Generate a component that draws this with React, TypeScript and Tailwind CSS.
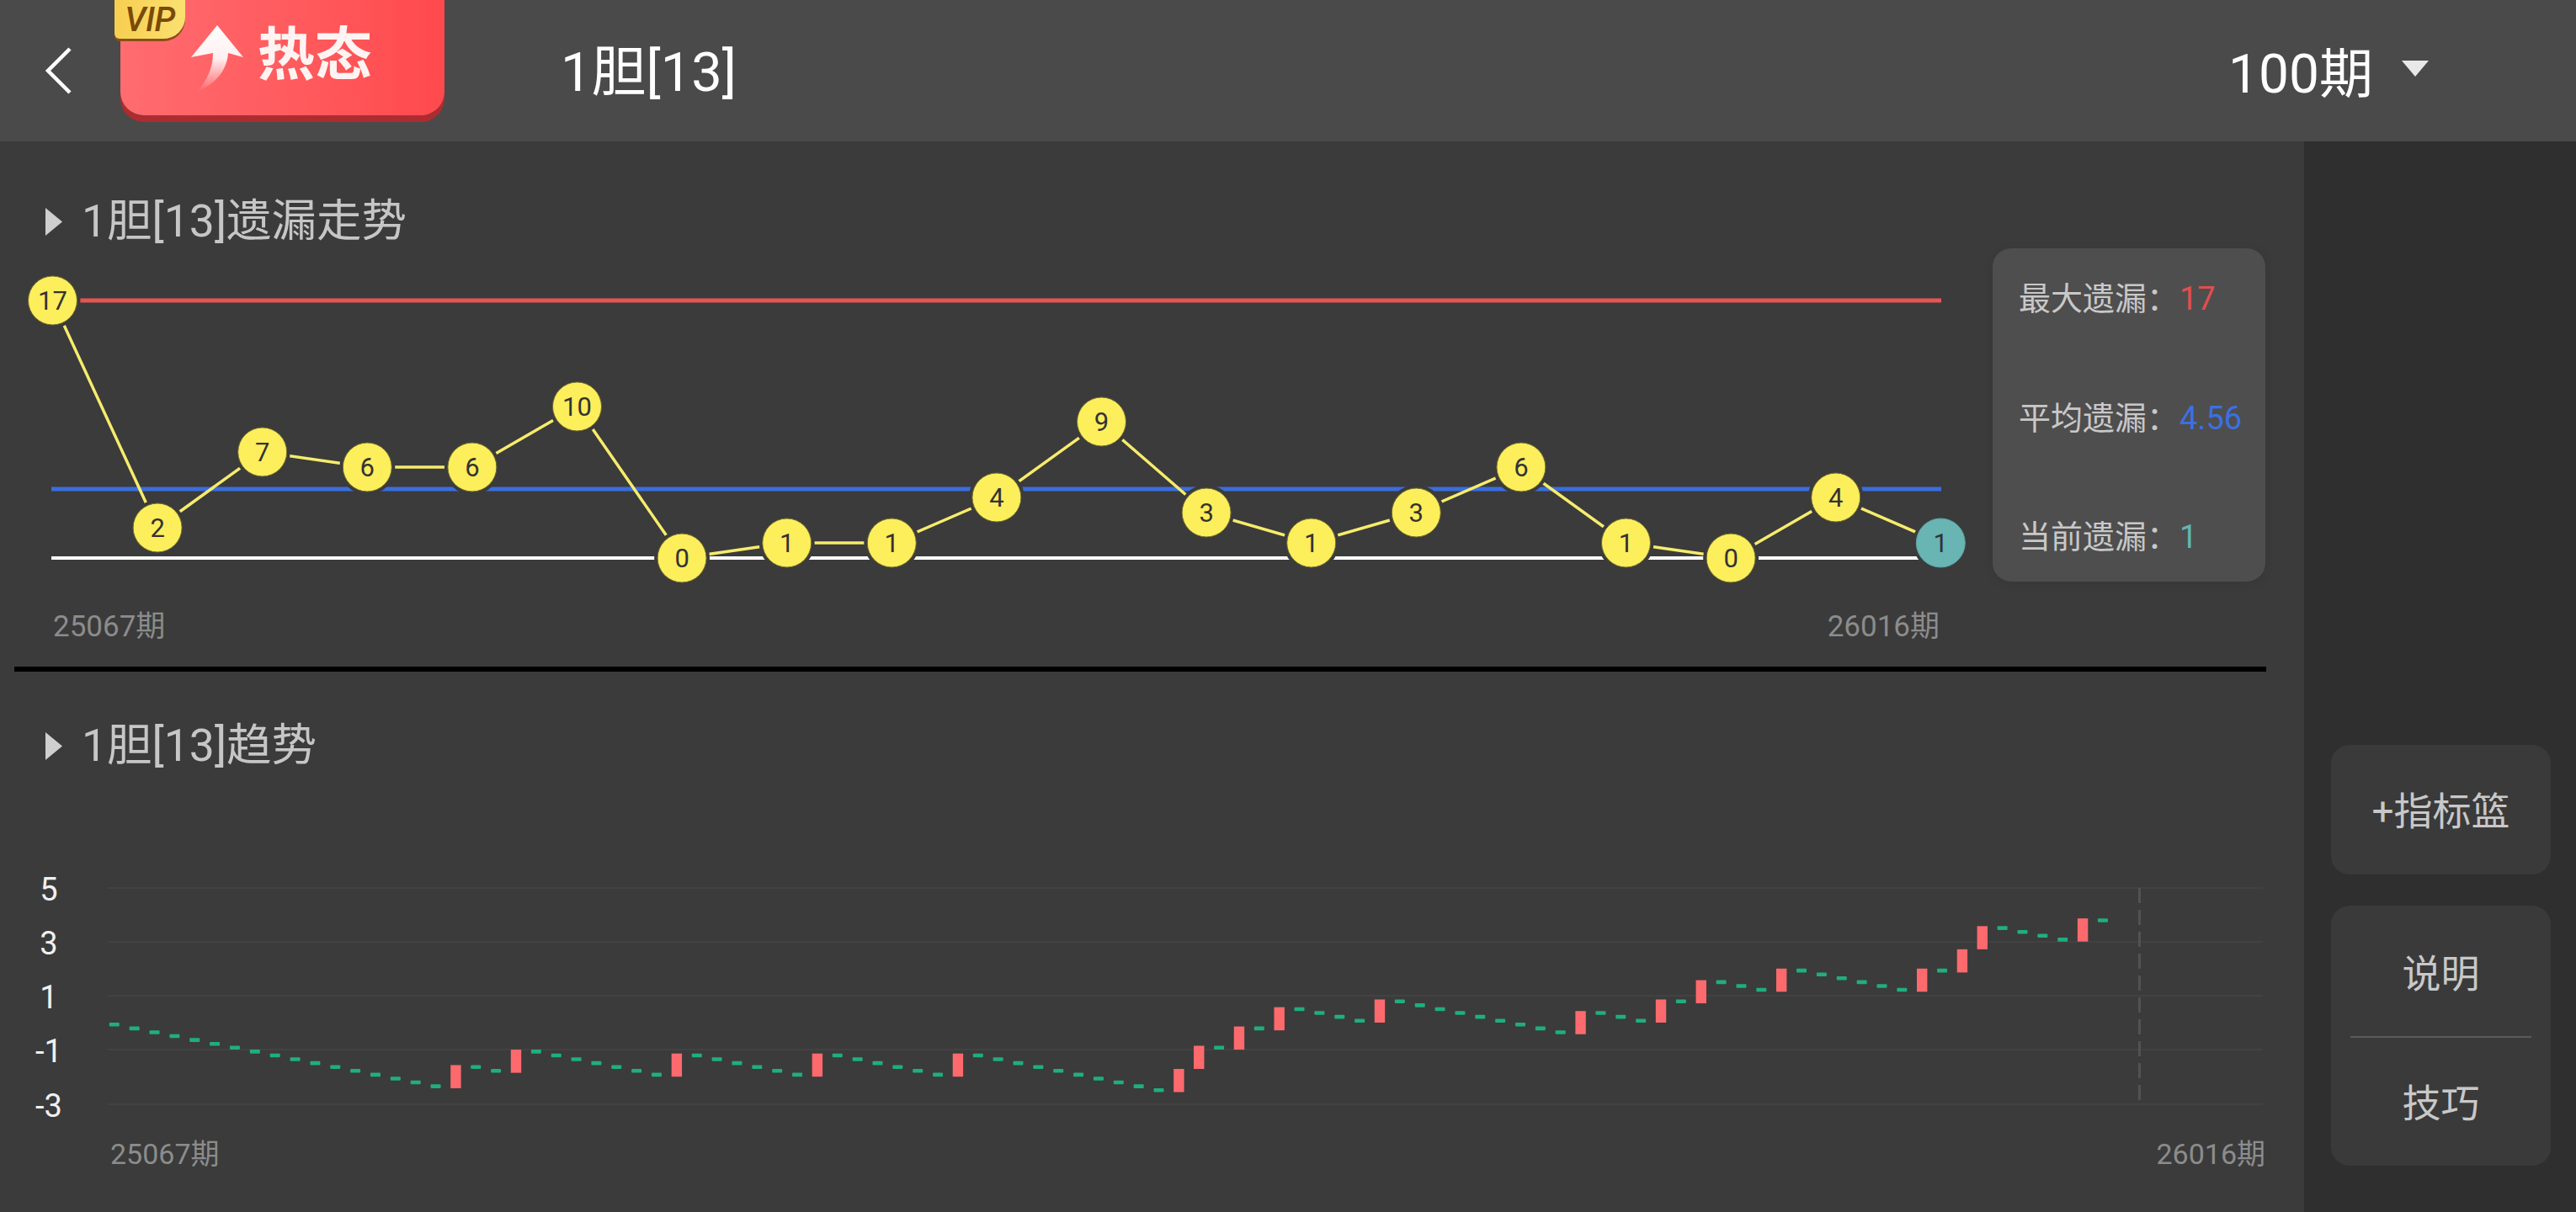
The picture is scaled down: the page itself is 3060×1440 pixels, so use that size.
import React from "react";

const nodes = [17, 2, 7, 6, 6, 10, 0, 1, 1, 4, 9, 3, 1, 3, 6, 1, 0, 4, 1];
const nx = (i: number) => 62.5 + i * 124.6;
const ny = (v: number) => 663 - 18 * v;

const hits = new Set([17, 20, 28, 35, 42, 53, 54, 56, 58, 63, 73, 77, 79, 83, 90, 92, 93, 98]);
const yOf = (v: number) => 1215 - 32.1 * v;

function Candles() {
  let c = 0;
  const out: React.ReactNode[] = [];
  for (let i = 0; i < 100; i++) {
    const x = 135.8 + i * 23.86;
    if (hits.has(i)) {
      const top = yOf(c + 6 / 7);
      const bot = yOf(c);
      out.push(<rect key={i} x={x - 6.2} y={top} width={12.4} height={bot - top} fill="#fc6a6e" />);
      c += 6 / 7;
    } else {
      const top = yOf(c);
      const bot = yOf(c - 1 / 7);
      out.push(<rect key={i} x={x - 6} y={top} width={12} height={bot - top} rx={1} fill="#1fae80" />);
      c -= 1 / 7;
    }
  }
  return <>{out}</>;
}

function TrendChart() {
  return (
    <svg viewBox="0 295 2367 396" className="w-[2367px] h-[396px] shrink-0 overflow-visible">
      <line x1={61} x2={2306} y1={357} y2={357} stroke="#e65454" strokeWidth={5} />
      <line x1={61} x2={2306} y1={581} y2={581} stroke="#3a6ede" strokeWidth={5} />
      <line x1={61} x2={2306} y1={663} y2={663} stroke="#ffffff" strokeWidth={4} />
      <polyline
        points={nodes.map((v, i) => `${nx(i)},${ny(v)}`).join(" ")}
        fill="none"
        stroke="#f6ec6c"
        strokeWidth={3.5}
      />
      {nodes.map((v, i) => {
        const last = i === nodes.length - 1;
        return (
          <g key={i}>
            <circle cx={nx(i)} cy={ny(v)} r={33} fill="#3b3b3b" />
            <circle
              cx={nx(i)}
              cy={ny(v)}
              r={29}
              fill={last ? "#68b5b4" : "#fdee5c"}
              stroke={last ? "#5aa3a2" : "#6f6a2e"}
              strokeWidth={1}
            />
            <text
              x={nx(i)}
              y={ny(v) + 11}
              textAnchor="middle"
              fontSize={31}
              fill="#333333"
            >
              {v}
            </text>
          </g>
        );
      })}
    </svg>
  );
}

function KChart() {
  const ys = [1055, 1119, 1183, 1247, 1312];
  const labels = ["5", "3", "1", "-1", "-3"];
  return (
    <svg viewBox="0 1020 2737 320" className="w-[2737px] h-[320px] shrink-0">
      {ys.map((y) => (
        <line key={y} x1={128} x2={2688} y1={y} y2={y} stroke="#424242" strokeWidth={2} />
      ))}
      <line x1={2541.5} x2={2541.5} y1={1055} y2={1312} stroke="#525252" strokeWidth={3} strokeDasharray="18 8" />
      {ys.map((y, i) => (
        <text key={y} x={58} y={y + 15} textAnchor="middle" fontSize={38} fill="#f0f0f0">
          {labels[i]}
        </text>
      ))}
      <Candles />
    </svg>
  );
}

function SectionTitle({ children, className }: { children: React.ReactNode; className: string }) {
  return (
    <div className={`flex items-center h-[60px] ${className}`}>
      <svg viewBox="0 0 20 33" className="w-[20px] h-[33px] ml-[54px] mr-[23px]">
        <path d="M0 0 L20 16.5 L0 33 Z" fill="#cfcfcf" />
      </svg>
      <span className="text-[53.5px] leading-[60px] text-[#c6c6c6]">{children}</span>
    </div>
  );
}

function Stat({ label, value, color }: { label: string; value: string; color: string }) {
  return (
    <div className="flex h-[44px] items-center text-[38px] leading-[44px] text-[#c8c8c8]">
      <span className="w-[191px]">{label}：</span>
      <span className={color}>{value}</span>
    </div>
  );
}

export default function App() {
  return (
    <div className="w-[3060px] h-[1440px] overflow-hidden flex flex-col bg-[#3b3b3b] font-[Roboto,'Noto_Sans_CJK_SC',sans-serif]">
      <header className="h-[168px] shrink-0 bg-[#4a4a4a] flex items-start">
        <svg viewBox="0 0 34 56" className="w-[34px] h-[56px] ml-[52px] mt-[56px] shrink-0">
          <path d="M31 2 L5 28 L31 54" fill="none" stroke="#ffffff" strokeWidth={4.5} />
        </svg>
        <div className="relative ml-[57px] w-[385px] h-[137px] shrink-0 rounded-b-[28px] bg-gradient-to-r from-[#ff6c70] to-[#ff494d] shadow-[0_8px_0_#ad2c30] flex items-start">
          <div className="absolute -left-[7px] top-0 w-[84px] h-[46px] rounded-br-[26px] rounded-bl-[6px] bg-gradient-to-r from-[#f7ce50] to-[#fbe070] shadow-[0_3px_0_#8a4f18] flex items-start justify-center">
            <span className="text-[40px] leading-[47px] italic font-medium tracking-[-0.5px] text-[#7a4a06]">
              VIP
            </span>
          </div>
          <svg viewBox="0 0 62 80" className="w-[62px] h-[80px] ml-[84px] mt-[30px] shrink-0">
            <defs>
              <linearGradient id="arrowFade" x1="0" y1="0" x2="0" y2="1">
                <stop offset="0" stopColor="#ffffff" />
                <stop offset="0.5" stopColor="#ffffff" stopOpacity="0.9" />
                <stop offset="1" stopColor="#ffffff" stopOpacity="0" />
              </linearGradient>
            </defs>
            <path
              d="M31 0 L62 38 L44 33 C43 52 30 70 7 79 C20 64 26 50 26 33 L0 38 Z"
              fill="url(#arrowFade)"
            />
          </svg>
          <span className="ml-[17px] mt-[26px] text-[68px] leading-[80px] font-bold text-[#fff4f2]">热态</span>
        </div>
        <span className="ml-[138px] mt-[50px] text-[65px] leading-[72px] text-white">1胆[13]</span>
        <span className="ml-auto mt-[53px] text-[64px] leading-[72px] text-white">100期</span>
        <svg viewBox="0 0 32 19" className="w-[32px] h-[19px] ml-[34px] mr-[175px] mt-[72px] shrink-0">
          <path d="M0 0 H32 L16 19 Z" fill="#e8e8e8" />
        </svg>
      </header>

      <div className="flex flex-1 min-h-0">
        <main className="w-[2737px] shrink-0 flex flex-col">
          <section className="h-[624px] shrink-0 flex flex-col">
            <SectionTitle className="mt-[65px]">1胆[13]遗漏走势</SectionTitle>
            <div className="flex mt-[2px]">
              <TrendChart />
              <aside className="w-[324px] h-[396px] rounded-[22px] bg-[#4e4e4e] pl-[31px] pt-[38px] pb-[31px] flex flex-col justify-between shadow-[0_2px_12px_rgba(0,0,0,0.08)]">
                <Stat label="最大遗漏" value="17" color="text-[#e04f4f]" />
                <Stat label="平均遗漏" value="4.56" color="text-[#3b70e2]" />
                <Stat label="当前遗漏" value="1" color="text-[#62b6b2]" />
              </aside>
            </div>
            <div className="flex justify-between w-[2304px] pl-[63px] mt-[34px] h-[40px] items-center text-[35px] text-[#8c8c8c]">
              <span>25067期</span>
              <span>26016期</span>
            </div>
          </section>

          <div className="h-[6px] w-[2675px] ml-[17px] bg-black shrink-0" />

          <section className="flex flex-col flex-1 min-h-0">
            <SectionTitle className="mt-[58px]">1胆[13]趋势</SectionTitle>
            <div className="mt-[104px]">
              <KChart />
            </div>
            <div className="flex justify-between w-[2691px] pl-[131px] mt-[11px] h-[40px] items-center text-[34px] text-[#8c8c8c]">
              <span>25067期</span>
              <span>26016期</span>
            </div>
          </section>
        </main>

        <aside className="flex-1 bg-[#2f2f2f] pl-[32px] pr-[30px] pt-[717px] flex flex-col text-[46px] text-[#c8c8c8]">
          <div className="h-[154px] pt-[5px] rounded-[22px] bg-[#3a3a3a] flex items-center justify-center">+指标篮</div>
          <div className="h-[309px] mt-[37px] rounded-[22px] bg-[#3a3a3a] flex flex-col">
            <div className="flex-1 pt-[8px] flex items-center justify-center">说明</div>
            <div className="h-[2px] mx-[23px] bg-[#5a5a5a]" />
            <div className="flex-1 pt-[5px] flex items-center justify-center">技巧</div>
          </div>
        </aside>
      </div>
    </div>
  );
}
